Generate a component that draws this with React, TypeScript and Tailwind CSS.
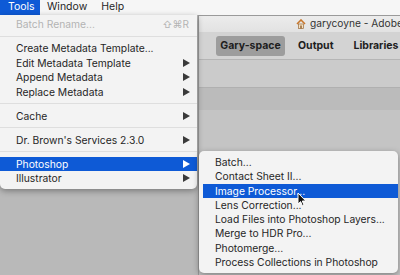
import React from "react";

const Arrow = () => (
  <svg width="7" height="8" viewBox="0 0 7 8" className="shrink-0">
    <path d="M0 0 L7 4 L0 8 Z" fill="currentColor" />
  </svg>
);

type Row = { label: string; sub?: boolean; disabled?: boolean; shortcut?: string; active?: boolean } | "sep";

const toolsRows: Row[] = [
  { label: "Batch Rename...", disabled: true, shortcut: "⇧⌘R" },
  "sep",
  { label: "Create Metadata Template..." },
  { label: "Edit Metadata Template", sub: true },
  { label: "Append Metadata", sub: true },
  { label: "Replace Metadata", sub: true },
  "sep",
  { label: "Cache", sub: true },
  "sep",
  { label: "Dr. Brown's Services 2.3.0", sub: true },
  "sep",
  { label: "Photoshop", sub: true, active: true },
  { label: "Illustrator", sub: true },
];

const subRows = [
  "Batch...",
  "Contact Sheet II...",
  "Image Processor...",
  "Lens Correction...",
  "Load Files into Photoshop Layers...",
  "Merge to HDR Pro...",
  "Photomerge...",
  "Process Collections in Photoshop",
];

export default function App() {
  return (
    <div className="relative w-[400px] h-[275px] overflow-hidden bg-[#b9b9b9] font-['Inter','Liberation_Sans',sans-serif] text-[#262626]">
      {/* menu bar */}
      <div className="flex h-[15px] items-center bg-[#f6f6f6] text-[10.5px] leading-none">
        <div className="flex h-full w-[40px] items-center bg-[#0e5ad6] pl-[8px] text-white">Tools</div>
        <div className="pl-[7px] pr-[14px]">Window</div>
        <div>Help</div>
      </div>

      {/* background window */}
      <div className="flex">
        <div className="w-[198px] shrink-0" />
        <div className="flex flex-1 flex-col border-l border-t border-[#9a9a9a]">
          <div className="flex h-[16px] items-center overflow-hidden bg-gradient-to-b from-[#ececec] to-[#e2e2e2] pl-[97px] text-[10.2px] text-[#333]">
            <svg width="10" height="10" viewBox="0 0 10 10" className="mr-[4px] shrink-0">
              <path d="M1 5 L5 1 L9 5" fill="none" stroke="#c9772b" strokeWidth="1.6" />
              <rect x="2.5" y="5" width="5" height="4.5" fill="#f3e2c4" stroke="#9a6a3a" strokeWidth="0.7" />
              <rect x="4.2" y="6.5" width="1.6" height="3" fill="#9a6a3a" />
            </svg>
            <span className="whitespace-nowrap">garycoyne - Adobe</span>
          </div>
          <div className="flex h-[27px] items-center bg-[#d3d3d3] pl-[17px] text-[10.5px] font-bold text-[#1e1e1e]">
            <div className="flex h-[20px] w-[69px] items-center justify-center rounded-[3px] bg-[#9d9d9d]">Gary-space</div>
            <div className="ml-[13px]">Output</div>
            <div className="ml-[20px] whitespace-nowrap">Libraries</div>
          </div>
          <div className="h-[1px] bg-[#b5b5b5]" />
          <div className="h-[27px] bg-[#cbcbcb]" />
          <div className="h-[23px] border-t border-[#b0b0b0] bg-[#bbbbbb]" />
          <div className="h-[170px] bg-[#c4c4c4]" />
        </div>
      </div>

      {/* Tools menu */}
      <div className="absolute left-0 top-[15px] flex w-[197px] flex-col rounded-b-[5px] bg-[#f3f3f3] pt-[2px] pb-[3px] text-[10.3px] leading-none shadow-[0_2px_6px_rgba(0,0,0,0.35)]">
        {toolsRows.map((r, i) =>
          r === "sep" ? (
            <div key={i} className="flex h-[9.5px] items-center">
              <div className="h-[1px] w-full bg-[#dedede]" />
            </div>
          ) : (
            <div
              key={i}
              className={
                "flex h-[14.5px] items-center justify-between pl-[16px] pr-[7px] " +
                (r.active ? "bg-[#0e5ad6] text-white" : r.disabled ? "text-[#b3b3b3]" : "text-[#262626]")
              }
            >
              <span className="whitespace-nowrap">{r.label}</span>
              {r.shortcut && <span className="pr-[1px] text-[10px] text-[#b3b3b3]">{r.shortcut}</span>}
              {r.sub && (
                <span className={r.active ? "text-white" : "text-[#3a3a3a]"}>
                  <Arrow />
                </span>
              )}
            </div>
          )
        )}
      </div>

      {/* Photoshop submenu */}
      <div className="absolute left-[199px] top-[151px] flex w-[199px] flex-col rounded-[5px] bg-[#f3f3f3] pt-[4px] pb-[4px] text-[10.3px] leading-none shadow-[0_2px_6px_rgba(0,0,0,0.35)]">
        {subRows.map((s, i) => (
          <div
            key={i}
            className={
              "ml-[4px] flex h-[14.3px] items-center pl-[12px] " +
              (i === 2 ? "bg-[#0e5ad6] text-white" : "text-[#262626]")
            }
          >
            <span className="whitespace-nowrap">{s}</span>
          </div>
        ))}
      </div>

      {/* cursor */}
      <svg className="absolute left-[297px] top-[192px]" width="10" height="15" viewBox="0 0 10 15">
        <path d="M1 1 L1 12 L3.6 9.6 L5.4 13.8 L7 13.1 L5.3 9 L8.8 9 Z" fill="#111" stroke="#fff" strokeWidth="1" strokeLinejoin="round" />
      </svg>
    </div>
  );
}
